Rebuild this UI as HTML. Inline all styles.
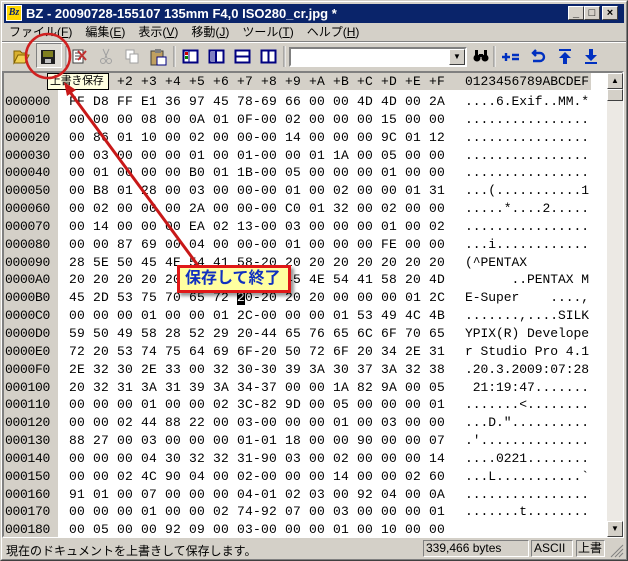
<!DOCTYPE html>
<html><head><meta charset="utf-8"><style>
*{margin:0;padding:0;box-sizing:border-box}
body{width:628px;height:561px;background:#d4d0c8;position:relative;overflow:hidden;font-family:"Liberation Sans","Noto Sans CJK JP",sans-serif;font-size:12px}
.a{position:absolute}
#title{left:4px;top:4px;width:620px;height:19px;background:#0a246a;color:#fff;font-weight:bold;font-size:13px;line-height:19px}
.tb{position:absolute;top:2px;width:16px;height:14px;background:#d4d0c8;border:1px solid;border-color:#fff #404040 #404040 #fff;color:#000;font-size:11px;line-height:12px;text-align:center;font-weight:bold}
#menu span{margin-right:13px}
.mono{font-family:"Liberation Mono",monospace;font-size:13px}
#hex div{white-space:pre;height:17.85px;line-height:17.85px}
</style></head><body>
<div class="a" style="left:0;top:0;width:628px;height:561px;border:1px solid;border-color:#d4d0c8 #404040 #404040 #d4d0c8"></div>
<div class="a" style="left:1px;top:1px;width:626px;height:559px;border:1px solid;border-color:#fff #808080 #808080 #fff"></div>
<div id="title" class="a">
 <div class="a" style="left:2px;top:1px;width:16px;height:16px;background:#ffd800;border:1px solid #fff;color:#0a246a;font:italic bold 10px 'Liberation Serif',serif;line-height:14px;text-align:center">Bz</div>
 <span style="position:absolute;left:22px">BZ - 20090728-155107 135mm F4,0 ISO280_cr.jpg *</span>
 <div class="tb" style="left:564px">_</div><div class="tb" style="left:580px">□</div><div class="tb" style="left:598px">×</div>
</div>
<div id="menu" class="a" style="left:9px;top:24px;font-size:12px;line-height:16px"><span>ファイル(<u>F</u>)</span><span>編集(<u>E</u>)</span><span>表示(<u>V</u>)</span><span>移動(<u>J</u>)</span><span>ツール(<u>T</u>)</span><span>ヘルプ(<u>H</u>)</span></div>
<div class="a" style="left:2px;top:41px;width:624px;height:2px;border-top:1px solid #808080;border-bottom:1px solid #fff"></div>
<div class="a" style="left:36px;top:43px;width:26px;height:25px;border:1px solid;border-color:#808080 #fff #fff #808080;background:#e0ddd6"></div>
<svg class="a" style="left:0;top:42px" width="628" height="28">
 <path d="M14 9h6l2 2h5v3H18l-4 7z" fill="#d8b030" stroke="#806000"/><path d="M14 21l4-8h11l-4 8z" fill="#f0d050" stroke="#806000"/>
 <rect x="41" y="8" width="14" height="14" fill="#202020"/><rect x="43" y="9" width="10" height="6" fill="#808020"/><rect x="45" y="17" width="6" height="4" fill="#c0c0c0"/>
 <line x1="66" y1="4" x2="66" y2="25" stroke="#808080"/><line x1="67" y1="4" x2="67" y2="25" stroke="#fff"/>
 <rect x="73" y="8" width="10" height="13" fill="#fff" stroke="#404040"/><path d="M75 11h6M75 14h6M75 17h6" stroke="#404040"/><path d="M78 9l8 9M86 9l-8 9" stroke="#c03030" stroke-width="2"/>
 <path d="M103 7l4 9M109 7l-4 9" stroke="#a0a0a0"/><circle cx="103" cy="19" r="2.5" fill="none" stroke="#a0a0a0"/><circle cx="109" cy="19" r="2.5" fill="none" stroke="#a0a0a0"/>
 <rect x="126" y="8" width="8" height="9" fill="#fff" stroke="#a0a0a0"/><rect x="130" y="12" width="8" height="9" fill="#fff" stroke="#a0a0a0"/>
 <rect x="151" y="9" width="12" height="14" fill="#c0a060" stroke="#404040"/><rect x="155" y="7" width="6" height="4" fill="#808080"/><rect x="157" y="15" width="9" height="8" fill="#fff" stroke="#000080"/>
 <line x1="174" y1="4" x2="174" y2="25" stroke="#808080"/><line x1="175" y1="4" x2="175" y2="25" stroke="#fff"/>
 <rect x="183.5" y="8.5" width="14" height="12" fill="#fff" stroke="#000080" stroke-width="2"/><rect x="185" y="10" width="3" height="3" fill="#c00"/><rect x="185" y="14" width="3" height="3" fill="#080"/><line x1="189" y1="9" x2="189" y2="20" stroke="#000080"/>
 <rect x="209.5" y="8.5" width="14" height="12" fill="#fff" stroke="#000080" stroke-width="2"/><line x1="216" y1="9" x2="216" y2="20" stroke="#000080" stroke-width="2"/><rect x="211" y="10" width="4" height="9" fill="#8080c0"/>
 <rect x="235.5" y="8.5" width="14" height="12" fill="#fff" stroke="#000080" stroke-width="2"/><line x1="236" y1="14.5" x2="249" y2="14.5" stroke="#000080" stroke-width="2"/>
 <rect x="261.5" y="8.5" width="14" height="12" fill="#fff" stroke="#000080" stroke-width="2"/><line x1="268.5" y1="9" x2="268.5" y2="20" stroke="#000080" stroke-width="2"/>
 <line x1="284" y1="4" x2="284" y2="25" stroke="#808080"/><line x1="285" y1="4" x2="285" y2="25" stroke="#fff"/>
 <circle cx="477" cy="16" r="3.5" fill="#000"/><circle cx="485" cy="16" r="3.5" fill="#000"/><rect x="475" y="8" width="3" height="6"/><rect x="484" y="8" width="3" height="6"/><rect x="479" y="12" width="4" height="3"/>
 <line x1="494" y1="4" x2="494" y2="25" stroke="#808080"/><line x1="495" y1="4" x2="495" y2="25" stroke="#fff"/>
 <path d="M502 15h8M506 11v8M512 13h7M512 17h7" stroke="#0030c0" stroke-width="2.4"/>
 <path d="M533 11h7a4 4 0 010 8h-7M536 8l-3 3 3 3" fill="none" stroke="#0030c0" stroke-width="2.4"/>
 <path d="M559 8h12" stroke="#0030c0" stroke-width="2"/><path d="M565 10l-6 6h4v6h4v-6h4z" fill="#0030c0"/>
 <path d="M585 21h12" stroke="#0030c0" stroke-width="2"/><path d="M591 19l-6-6h4V7h4v6h4z" fill="#0030c0"/>
</svg>
<div class="a" style="left:289px;top:47px;width:178px;height:20px;background:#fff;border:2px solid;border-color:#808080 #fff #fff #808080"></div>
<div class="a" style="left:449px;top:49px;width:16px;height:16px;background:#d4d0c8;border:1px solid;border-color:#fff #404040 #404040 #fff;font-size:8px;text-align:center;line-height:14px">▼</div>
<div class="a" style="left:2px;top:71px;width:622px;height:467px;border:2px solid;border-color:#808080 #fff #fff #808080;background:#fff"></div>
<div class="a" style="left:4px;top:73px;width:54px;height:464px;background:#d4d0c8"></div>
<div class="a" style="left:4px;top:73px;width:587px;height:17px;background:#d4d0c8"></div>
<div class="a mono" style="left:69px;top:73px;line-height:17px;white-space:pre;letter-spacing:0.2px">+0 +1 +2 +3 +4 +5 +6 +7 +8 +9 +A +B +C +D +E +F</div>
<div class="a mono" style="left:465px;top:73px;line-height:17px;letter-spacing:-0.05px">0123456789ABCDEF</div>
<div class="a" style="left:4px;top:93px;width:603px;height:444px;overflow:hidden">
<div id="hex" class="a mono" style="left:1px;top:0;letter-spacing:-0.3px"><div>000000</div><div>000010</div><div>000020</div><div>000030</div><div>000040</div><div>000050</div><div>000060</div><div>000070</div><div>000080</div><div>000090</div><div>0000A0</div><div>0000B0</div><div>0000C0</div><div>0000D0</div><div>0000E0</div><div>0000F0</div><div>000100</div><div>000110</div><div>000120</div><div>000130</div><div>000140</div><div>000150</div><div>000160</div><div>000170</div><div>000180</div></div>
<div id="hex" class="a mono" style="left:65px;top:0;letter-spacing:0.2px"><div>FF D8 FF E1 36 97 45 78-69 66 00 00 4D 4D 00 2A</div><div>00 00 00 08 00 0A 01 0F-00 02 00 00 00 15 00 00</div><div>00 86 01 10 00 02 00 00-00 14 00 00 00 9C 01 12</div><div>00 03 00 00 00 01 00 01-00 00 01 1A 00 05 00 00</div><div>00 01 00 00 00 B0 01 1B-00 05 00 00 00 01 00 00</div><div>00 B8 01 28 00 03 00 00-00 01 00 02 00 00 01 31</div><div>00 02 00 00 00 2A 00 00-00 C0 01 32 00 02 00 00</div><div>00 14 00 00 00 EA 02 13-00 03 00 00 00 01 00 02</div><div>00 00 87 69 00 04 00 00-00 01 00 00 00 FE 00 00</div><div>28 5E 50 45 4E 54 41 58-20 20 20 20 20 20 20 20</div><div>20 20 20 20 20 20 00 00-50 45 4E 54 41 58 20 4D</div><div>45 2D 53 75 70 65 72 <span style="background:#000;color:#fff">2</span>0-20 20 20 00 00 00 01 2C</div><div>00 00 00 01 00 00 01 2C-00 00 00 01 53 49 4C 4B</div><div>59 50 49 58 28 52 29 20-44 65 76 65 6C 6F 70 65</div><div>72 20 53 74 75 64 69 6F-20 50 72 6F 20 34 2E 31</div><div>2E 32 30 2E 33 00 32 30-30 39 3A 30 37 3A 32 38</div><div>20 32 31 3A 31 39 3A 34-37 00 00 1A 82 9A 00 05</div><div>00 00 00 01 00 00 02 3C-82 9D 00 05 00 00 00 01</div><div>00 00 02 44 88 22 00 03-00 00 00 01 00 03 00 00</div><div>88 27 00 03 00 00 00 01-01 18 00 00 90 00 00 07</div><div>00 00 00 04 30 32 32 31-90 03 00 02 00 00 00 14</div><div>00 00 02 4C 90 04 00 02-00 00 00 14 00 00 02 60</div><div>91 01 00 07 00 00 00 04-01 02 03 00 92 04 00 0A</div><div>00 00 00 01 00 00 02 74-92 07 00 03 00 00 00 01</div><div>00 05 00 00 92 09 00 03-00 00 00 01 00 10 00 00</div></div>
<div id="hex" class="a mono" style="left:461px;top:0;letter-spacing:-0.05px"><div>....6.Exif..MM.*</div><div>................</div><div>................</div><div>................</div><div>................</div><div>...(...........1</div><div>.....*....2.....</div><div>................</div><div>...i............</div><div>(^PENTAX</div><div>      ..PENTAX M</div><div>E-Super    ....,</div><div>.......,....SILK</div><div>YPIX(R) Develope</div><div>r Studio Pro 4.1</div><div>.20.3.2009:07:28</div><div> 21:19:47.......</div><div>.......&lt;........</div><div>...D.″..........</div><div>.'..............</div><div>....0221........</div><div>...L...........`</div><div>................</div><div>.......t........</div><div></div></div>
</div>
<div class="a" style="left:607px;top:73px;width:16px;height:464px;background:#ece9e4"></div>
<div class="a" style="left:607px;top:73px;width:16px;height:16px;background:#d4d0c8;border:1px solid;border-color:#fff #404040 #404040 #fff;font-size:8px;text-align:center;line-height:14px">▲</div>
<div class="a" style="left:607px;top:89px;width:16px;height:12px;background:#d4d0c8;border:1px solid;border-color:#fff #404040 #404040 #fff"></div>
<div class="a" style="left:607px;top:521px;width:16px;height:16px;background:#d4d0c8;border:1px solid;border-color:#fff #404040 #404040 #fff;font-size:8px;text-align:center;line-height:14px">▼</div>
<div class="a" style="left:6px;top:542px;font-size:12px">現在のドキュメントを上書きして保存します。</div>
<div class="a" style="left:423px;top:540px;width:106px;height:17px;border:1px solid;border-color:#808080 #fff #fff #808080;font-size:12px;line-height:15px;padding-left:2px">339,466 bytes</div>
<div class="a" style="left:531px;top:540px;width:42px;height:17px;border:1px solid;border-color:#808080 #fff #fff #808080;font-size:12px;line-height:15px;padding-left:2px">ASCII</div>
<div class="a" style="left:576px;top:540px;width:29px;height:17px;border:1px solid;border-color:#808080 #fff #fff #808080;font-size:12px;line-height:15px;padding-left:1px">上書</div>
<svg class="a" style="left:610px;top:544px" width="14" height="14"><path d="M13 1L1 13M13 5L5 13M13 9L9 13" stroke="#808080"/></svg>
<div class="a" style="left:47px;top:73px;width:62px;height:17px;background:#ffffe1;border:1px solid #000;font-size:11px;line-height:15px;padding-left:2px;white-space:nowrap;overflow:hidden;letter-spacing:-0.3px">上書き保存</div>
<svg class="a" style="left:0;top:0" width="628" height="561">
 <circle cx="48" cy="56" r="22" fill="none" stroke="#d02020" stroke-width="2.5"/>
 <line x1="205" y1="275" x2="70" y2="92" stroke="#c81818" stroke-width="3"/>
 <path d="M64 82l3 14 9-6z" fill="#c81818"/>
</svg>
<div class="a" style="left:177px;top:265px;width:114px;height:28px;background:#ffffa0;border:3px solid #e01818;box-shadow:3px 3px 3px rgba(0,0,0,0.4);color:#1030c0;font-weight:bold;font-size:16px;line-height:22px;padding-left:5px">保存して終了</div>
</body></html>
